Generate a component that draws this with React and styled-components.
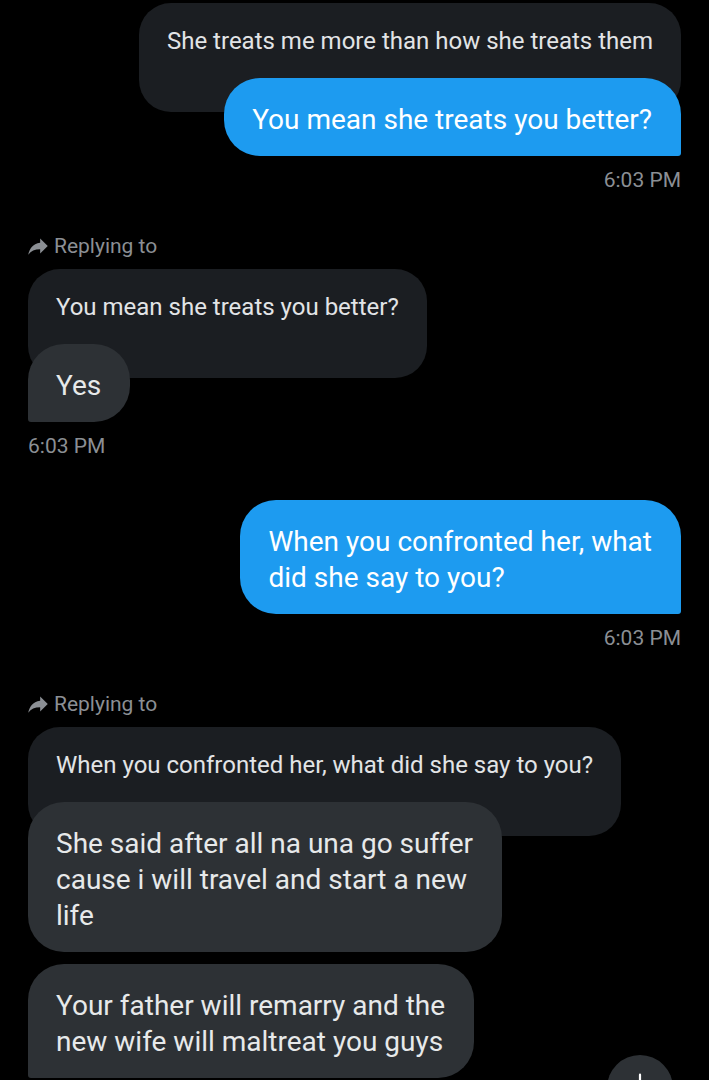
import styled, { createGlobalStyle } from 'styled-components';

const GlobalStyle = createGlobalStyle`
    html, body {
        margin: 0;
        padding: 0;
        background: #000;
        height: 1080px;
        overflow: hidden;
    }
    * {
        box-sizing: border-box;
    }
`;

const ReplyIcon = () => (
    <svg width="26" height="26" viewBox="0 0 24 24" fill="#8b8f94">
        <path transform="translate(24 0) scale(-1 1)" d="M10 9V5l-7 7 7 7v-4.1c5 0 8.5 1.6 11 5.1-1-5-4-10-11-11z" />
    </svg>
);

const messages = [
    {
        side: 'out',
        quote: 'She treats me more than how she treats them',
        bubbles: [['You mean she treats you better?']],
        time: '6:03 PM',
    },
    {
        side: 'in',
        replying: true,
        quote: 'You mean she treats you better?',
        bubbles: [['Yes']],
        time: '6:03 PM',
    },
    {
        side: 'out',
        bubbles: [['When you confronted her, what', 'did she say to you?']],
        time: '6:03 PM',
    },
    {
        side: 'in',
        replying: true,
        quote: 'When you confronted her, what did she say to you?',
        bubbles: [
            ['She said after all na una go suffer', 'cause i will travel and start a new', 'life'],
            ['Your father will remarry and the', 'new wife will maltreat you guys'],
        ],
    },
];

const App = () => {
    return (
        <>
            <GlobalStyle />
            <Thread>
                {messages.map((msg, i) => (
                    <Group key={i} $side={msg.side}>
                        {msg.replying && (
                            <ReplyLabel>
                                <ReplyIcon />
                                <span>Replying to</span>
                            </ReplyLabel>
                        )}
                        {msg.quote && <Quote>{msg.quote}</Quote>}
                        {msg.bubbles.map((lines, j) => (
                            <Bubble
                                key={j}
                                $side={msg.side}
                                $overlap={msg.quote && j === 0}
                                $last={j === msg.bubbles.length - 1}
                            >
                                {lines.map((line, k) => (
                                    <Line key={k}>{line}</Line>
                                ))}
                            </Bubble>
                        ))}
                        {msg.time && <Stamp>{msg.time}</Stamp>}
                    </Group>
                ))}
            </Thread>
            <ScrollButton>
                <svg width="22" height="22" viewBox="0 0 24 24" fill="none" stroke="#fff" strokeWidth="2.4" strokeLinecap="round">
                    <path d="M12 4v15M6 13l6 6 6-6" />
                </svg>
            </ScrollButton>
        </>
    );
};

export default App;

const Thread = styled.div`
    display: flex;
    flex-direction: column;
    padding: 3px 28px 0;
    font-family: Roboto, "Noto Sans", sans-serif;
`;

const Group = styled.div`
    display: flex;
    flex-direction: column;
    align-items: ${({ $side }) => ($side === 'out' ? 'flex-end' : 'flex-start')};
    margin-bottom: 42px;
`;

const ReplyLabel = styled.div`
    display: flex;
    align-items: center;
    gap: 3px;
    height: 24px;
    margin-bottom: 11px;
    font-size: 21px;
    color: #8b8f94;

    svg {
        margin-left: -3px;
    }
`;

const Quote = styled.div`
    background: #1b1e22;
    color: #e2e4e6;
    border-radius: 32px;
    padding: 24px 28px 56px;
    font-size: 24px;
    line-height: 29px;
    white-space: nowrap;
`;

const Bubble = styled.div`
    background: ${({ $side }) => ($side === 'out' ? '#1d9bf0' : '#2d3135')};
    color: ${({ $side }) => ($side === 'out' ? '#ffffff' : '#e7e9ea')};
    border-radius: 36px;
    border-bottom-right-radius: ${({ $side, $last }) => ($side === 'out' && $last ? '3px' : '36px')};
    border-bottom-left-radius: ${({ $side, $last }) => ($side === 'in' && $last ? '3px' : '36px')};
    padding: 24px 29px 18px 28px;
    font-size: 28px;
    line-height: 36px;
    margin-top: ${({ $overlap }) => ($overlap ? '-34px' : '12px')};
    white-space: nowrap;

    &:first-child {
        margin-top: 0;
    }
`;

const Line = styled.div``;

const Stamp = styled.div`
    margin-top: 12px;
    font-size: 21px;
    line-height: 24px;
    color: #8b8f94;
`;

const ScrollButton = styled.div`
    position: fixed;
    left: 607px;
    top: 1055px;
    width: 66px;
    height: 66px;
    border-radius: 50%;
    background: #2d3135;
    display: flex;
    justify-content: center;
    padding-top: 16px;
`;
